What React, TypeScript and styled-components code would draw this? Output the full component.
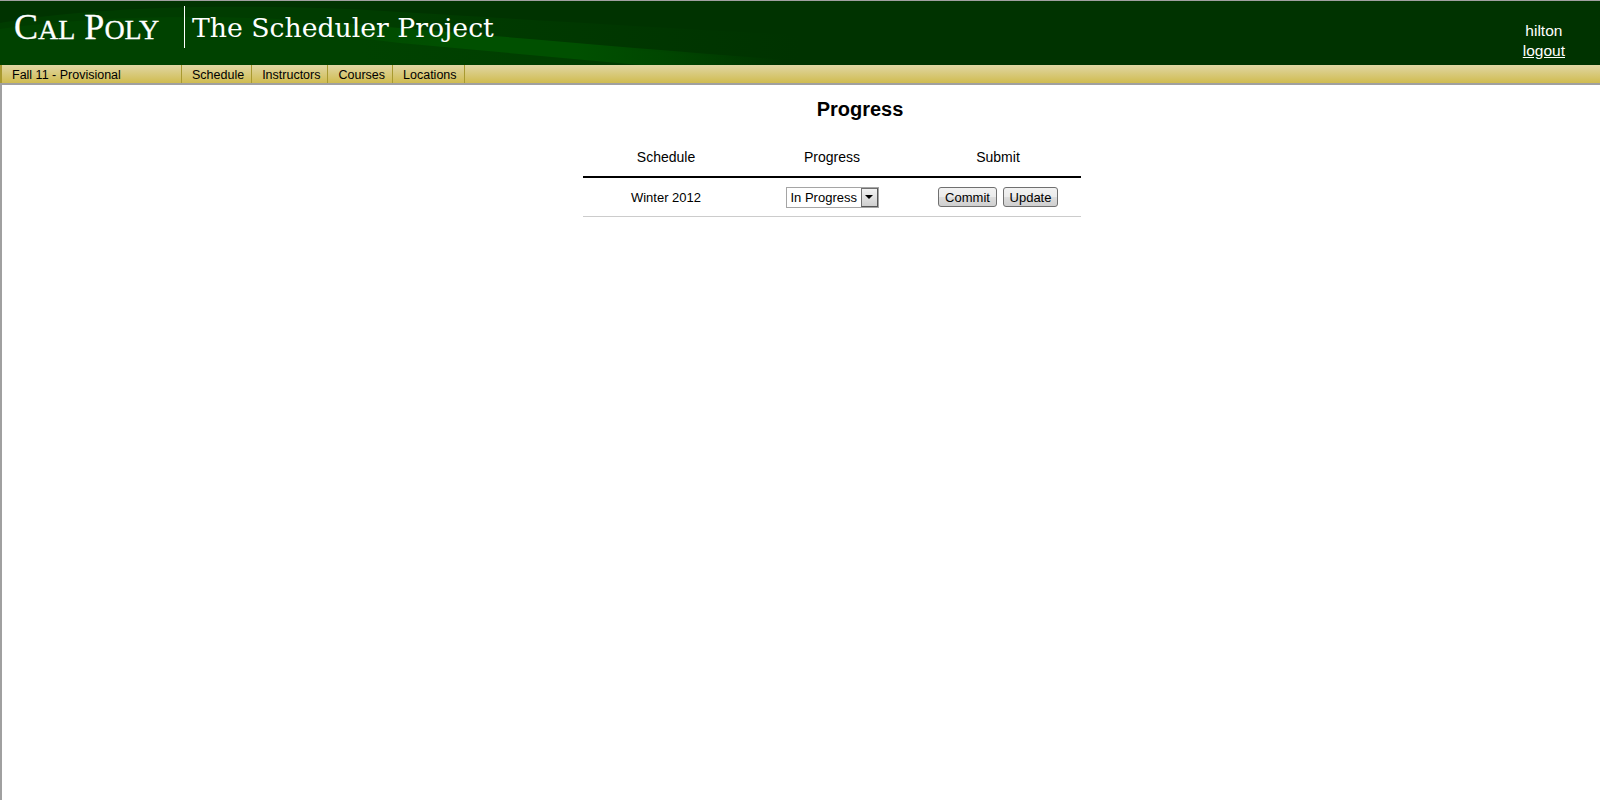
import React from 'react';
import styled, { createGlobalStyle } from 'styled-components';

const GlobalStyle = createGlobalStyle`
  html, body {
    margin: 0;
    padding: 0;
    background: #fff;
    font-family: "Liberation Sans", Arial, sans-serif;
  }
`;

const Page = styled.div`
  min-height: 800px;
  box-sizing: border-box;
  border-top: 1px solid #a0a0a0;
  background: #fff;
`;

const Header = styled.header`
  position: relative;
  height: 64px;
  background: #003300;
  display: flex;
  align-items: flex-start;
  overflow: hidden;
`;

const Swoosh = styled.svg`
  position: absolute;
  left: 0;
  top: 0;
`;

const Logo = styled.div`
  position: relative;
  width: 184px;
  box-sizing: border-box;
  padding: 8px 0 0 14px;
  font-family: "Liberation Serif", "Times New Roman", serif;
  font-size: 36px;
  line-height: 36px;
  color: #fff;
  white-space: nowrap;
  -webkit-text-stroke: 0.3px #fff;
`;

const SmallCap = styled.span`
  font-size: 28px;
`;

const Title = styled.div`
  position: relative;
  margin-top: 5px;
  height: 42px;
  border-left: 1px solid #fff;
  padding-left: 7px;
  font-family: "DejaVu Serif", serif;
  font-size: 26.7px;
  line-height: 44px;
  color: #fff;
  white-space: nowrap;
`;

const UserBox = styled.div`
  position: relative;
  margin-left: auto;
  margin-right: 35px;
  padding-top: 20px;
  display: flex;
  flex-direction: column;
  align-items: center;
  font-size: 15.5px;
  line-height: 20px;
  color: #fff;
`;

const Logout = styled.a`
  color: #fff;
  text-decoration: underline;
`;

const Nav = styled.nav`
  height: 18px;
  display: flex;
  background: linear-gradient(to bottom, #e0d6a4 0%, #d0bc50 100%);
  border-bottom: 2px solid #a0a0a0;
  font-size: 12.5px;
  line-height: 21px;
  color: #000;
`;

const Term = styled.div`
  width: 182px;
  box-sizing: border-box;
  padding-left: 10px;
  border-left: 2px solid #a89a30;
  border-right: 1px solid #a89a30;
`;

const NavItem = styled.a`
  padding: 0 7px 0 10px;
  border-right: 1px solid #a89a30;
`;

const Main = styled.main`
  height: 715px;
  border-left: 2px solid #a0a0a0;
  padding-top: 12px;
`;

const Heading = styled.h1`
  margin: 0;
  padding-left: 118px;
  text-align: center;
  font-size: 20px;
  line-height: 24px;
  font-weight: bold;
  color: #000;
`;

const Grid = styled.div`
  width: 498px;
  margin: 16px 0 0 581px;
  display: grid;
  grid-template-columns: repeat(3, 1fr);
`;

const HeadCell = styled.div`
  height: 39px;
  display: flex;
  align-items: center;
  justify-content: center;
  border-bottom: 2px solid #000;
  font-size: 14px;
  color: #000;
`;

const Cell = styled.div`
  height: 38px;
  display: flex;
  align-items: center;
  justify-content: center;
  gap: 6px;
  border-bottom: 1px solid #ccc;
  font-size: 13px;
  color: #000;
`;

const Select = styled.div`
  box-sizing: border-box;
  width: 93px;
  height: 21px;
  display: flex;
  justify-content: space-between;
  border: 1px solid #a5a5a5;
  padding-left: 4px;
  font-size: 13px;
  line-height: 19px;
  background: #fff;
`;

const SelectArrow = styled.span`
  box-sizing: border-box;
  width: 17px;
  height: 19px;
  display: flex;
  align-items: center;
  justify-content: center;
  border: 1px solid;
  border-color: #707070 #555 #555 #707070;
  background: linear-gradient(to bottom, #f2f2f2, #cfcfcf);

  &::after {
    content: "";
    border-left: 4px solid transparent;
    border-right: 4px solid transparent;
    border-top: 4px solid #000;
  }
`;

const Button = styled.button<{ $w: number }>`
  box-sizing: border-box;
  width: ${props => props.$w}px;
  height: 20px;
  padding: 0;
  border: 1px solid #707070;
  border-radius: 3px;
  background: linear-gradient(to bottom, #f2f2f2 0%, #ebebeb 50%, #dddddd 51%, #cfcfcf 100%);
  font-family: "Liberation Sans", Arial, sans-serif;
  font-size: 13px;
  color: #000;
`;

const App: React.FC = () => {
  return (
    <Page>
      <GlobalStyle />
      <Header>
        <Swoosh width="800" height="64" viewBox="0 0 800 64">
          <defs>
            <linearGradient id="wash" x1="0" y1="0" x2="800" y2="0" gradientUnits="userSpaceOnUse">
              <stop offset="0.5" stopColor="#003c00" />
              <stop offset="1" stopColor="#003c00" stopOpacity="0" />
            </linearGradient>
            <linearGradient id="mid" x1="0" y1="0" x2="800" y2="0" gradientUnits="userSpaceOnUse">
              <stop offset="0.45" stopColor="#004200" />
              <stop offset="0.95" stopColor="#004200" stopOpacity="0" />
            </linearGradient>
            <linearGradient id="band" x1="0" y1="0" x2="800" y2="0" gradientUnits="userSpaceOnUse">
              <stop offset="0.3" stopColor="#005000" stopOpacity="0" />
              <stop offset="0.55" stopColor="#005000" />
              <stop offset="0.72" stopColor="#005000" />
              <stop offset="0.98" stopColor="#005000" stopOpacity="0" />
            </linearGradient>
          </defs>
          <path d="M0 22 C100 4 260 2 400 11 C520 18 680 28 800 34 L800 64 L0 64 Z" fill="url(#wash)" />
          <path d="M0 28 C130 10 280 14 400 28 C470 36 640 50 800 62 L800 64 L0 64 Z" fill="url(#mid)" />
          <path d="M340 22 C450 31 640 48 800 60 L800 64 L640 64 L400 42 L300 30 Z" fill="url(#band)" />
        </Swoosh>
        <Logo>C<SmallCap>AL</SmallCap> P<SmallCap>OLY</SmallCap></Logo>
        <Title>The Scheduler Project</Title>
        <UserBox>
          <span>hilton</span>
          <Logout href="#">logout</Logout>
        </UserBox>
      </Header>
      <Nav>
        <Term>Fall 11 - Provisional</Term>
        <NavItem>Schedule</NavItem>
        <NavItem>Instructors</NavItem>
        <NavItem>Courses</NavItem>
        <NavItem>Locations</NavItem>
      </Nav>
      <Main>
        <Heading>Progress</Heading>
        <Grid>
          <HeadCell>Schedule</HeadCell>
          <HeadCell>Progress</HeadCell>
          <HeadCell>Submit</HeadCell>
          <Cell>Winter 2012</Cell>
          <Cell>
            <Select>
              In Progress
              <SelectArrow />
            </Select>
          </Cell>
          <Cell>
            <Button $w={59}>Commit</Button>
            <Button $w={55}>Update</Button>
          </Cell>
        </Grid>
      </Main>
    </Page>
  );
};

export default App;
